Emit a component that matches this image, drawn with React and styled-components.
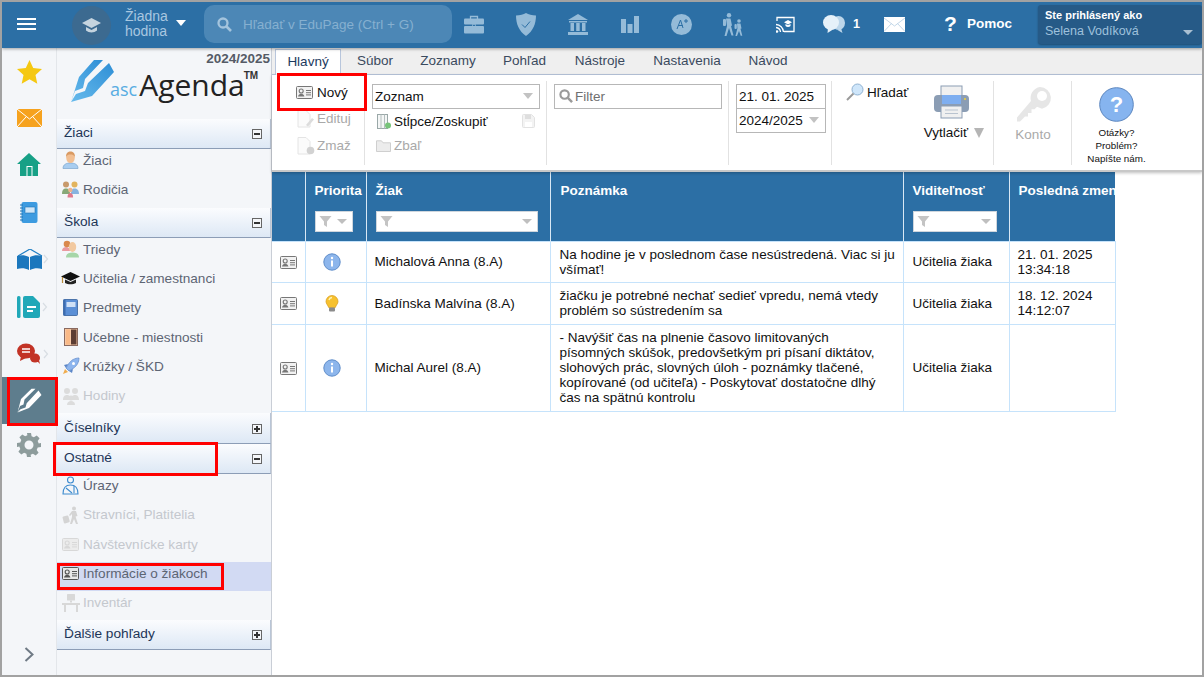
import React from "react";
import styled, { createGlobalStyle } from "styled-components";

const Global = createGlobalStyle`
  html, body { margin: 0; padding: 0; background: #fff; }
  * { box-sizing: border-box; }
  body { font-family: "Liberation Sans", Arial, sans-serif; font-size: 13.6px; }
`;

const Frame = styled.div`
  position: relative; width: 1204px; height: 677px; overflow: hidden;
  border: 2px solid #a2a2a2; background: #fff;
  display: flex; flex-direction: column;
`;
const TopBar = styled.header`
  height: 46px; flex: none; background: #2c6fa5; display: flex; align-items: center;
  position: relative; z-index: 2; box-shadow: 0 1px 3px rgba(0,0,0,.35); padding-left: 15px;
`;
const Burger = styled.div`
  width: 19px; height: 12px; margin-top: -2px; flex: none;
  border-top: 2px solid #fff; border-bottom: 2px solid #fff; position: relative;
  &::after { content: ""; position: absolute; left: 0; right: 0; top: 3px; height: 2px; background: #fff; }
`;
const LessonDisc = styled.div`
  width: 39px; height: 39px; border-radius: 50%; background: #3c6a90; margin-left: 36px; flex: none;
  display: flex; align-items: center; justify-content: center;
`;
const LessonText = styled.div`
  width: 50px; margin-left: 14px; color: #a9c7e0; font-size: 14px; line-height: 15px; margin-top: -2px; flex: none;
`;
const Caret = styled.span`
  flex: none; width: 0; height: 0; border-left: 5.5px solid transparent; border-right: 5.5px solid transparent;
  border-top: ${p => p.$h || 5}px solid ${p => p.$c || "#fff"}; margin-left: ${p => p.$ml || 0}px; margin-top: ${p => p.$mt || 0}px;
`;
const Search = styled.div`
  width: 248px; height: 38px; border-radius: 10px; background: #4c87b6; margin-left: 18px; flex: none;
  display: flex; align-items: center; padding-left: 13px; gap: 11px; color: #86b0d0; font-size: 13.5px; margin-top: -2px;
`;
const TopIcon = styled.div`
  flex: none; width: ${p => p.$w}px; margin-left: ${p => p.$ml}px; display: flex; justify-content: center; align-items: center; margin-top: -2px;
`;
const CountBadge = styled.span`
  color: #fff; font-weight: 700; font-size: 12.5px; margin-left: 8px; margin-top: -2px; flex: none; width: 10px;
`;
const HelpMark = styled.span`
  color: #fff; font-weight: 700; font-size: 21px; margin-left: 39px; width: 14px; margin-top: -2px; flex: none;
`;
const HelpLabel = styled.span`
  color: #fff; font-weight: 700; font-size: 13.5px; margin-left: 9px; margin-top: -3px; flex: none; width: 46px;
`;
const UserBox = styled.div`
  width: 164px; height: 39px; margin-left: 25px; background: #265a87; border-radius: 3px; flex: none; margin-top: -2px;
  padding: 3px 7px; position: relative; box-shadow: 0 1px 2px rgba(0,0,0,.3);
`;
const UserLabel = styled.div` color: #fff; font-weight: 700; font-size: 11px; line-height: 15px; `;
const UserRow = styled.div`
  color: #9fc1dc; font-size: 12.5px; line-height: 17px; display: flex; justify-content: space-between; align-items: center; padding-right: 2px;
`;

const Body = styled.div` flex: 1; display: flex; min-height: 0; `;
const Rail = styled.nav`
  width: 55px; flex: none; background: #f4f6f9; display: flex; flex-direction: column; border-right: 1px solid #e3e6ea;
`;
const RailItem = styled.div`
  height: 47px; flex: none; display: flex; align-items: center; justify-content: center; padding-left: ${p => p.$pl || 0}px;
  background: ${p => p.$active ? "#5e7d8d" : "transparent"};
  padding-bottom: ${p => p.$up || 0}px;
`;
const RailSpacer = styled.div` flex: 1; `;
const RailFoot = styled.div` height: 30px; flex: none; display: flex; justify-content: center; padding-top: 2px; `;

const Side = styled.aside`
  width: 215px; flex: none; background: #f4f6f9; border-right: 1px solid #c9ced6; display: flex; flex-direction: column;
`;
const LogoArea = styled.div`
  height: 71px; flex: none; position: relative; padding-left: 14px; display: flex; align-items: flex-start;
`;
const Year = styled.div`
  position: absolute; right: 1px; top: 3px; font-weight: 700; font-size: 13.5px; color: #555b66;
`;
const LogoMark = styled.div` margin-top: 12px; flex: none; `;
const LogoWords = styled.div` display: flex; align-items: baseline; margin-left: -5px; margin-top: 18px; `;
const Asc = styled.span` font-family: "Open Sans", sans-serif; font-size: 18px; line-height: 38px; color: #58ace2; `;
const Agenda = styled.span` font-family: "Open Sans", sans-serif; font-size: 30px; line-height: 38px; color: #222; margin-left: 2px; `;
const Tm = styled.span` font-weight: 700; font-size: 10px; color: #333; margin-left: -1px; transform: translateY(-17px); `;

const SectionHead = styled.div`
  height: ${p => p.$h || 29.5}px; flex: none; margin-top: ${p => p.$mt || 0}px; padding: 0 8px 2px 7px;
  background: linear-gradient(#fbfcfe, #dde8f5); border-bottom: 1px solid #8c9db6; border-right: 1px solid #b9c5d6;
  display: flex; align-items: center; justify-content: space-between; color: #1d3557; font-size: 13.7px;
`;
const Toggle = styled.span`
  width: 10px; height: 10px; border: 1px solid #666; background: #f4f6f9; position: relative; flex: none; margin-top: 3px;
  &::before { content: ""; position: absolute; left: 1px; right: 1px; top: 3px; height: 2px; background: #333; }
  ${p => p.$plus && `&::after { content: ""; position: absolute; top: 1px; bottom: 1px; left: 3px; width: 2px; background: #333; }`}
`;
const Item = styled.div`
  height: 29.3px; flex: none; display: flex; align-items: center; padding: 0 0 6px 4px; gap: 3px;
  font-size: 13.6px; color: ${p => p.$off ? "#c4c8ce" : "#5d6574"};
  background: ${p => p.$selected ? "#d2daf3" : "transparent"};
`;
const ItemIcon = styled.span` width: 19px; height: 18px; flex: none; display: flex; align-items: center; justify-content: center; `;

const Main = styled.main` flex: 1; min-width: 0; display: flex; flex-direction: column; `;
const Tabs = styled.div`
  height: 27px; flex: none; background: #efefef; border-bottom: 1px solid #b8c6dc; display: flex; align-items: flex-end; padding-left: 3px;
`;
const Tab = styled.div`
  height: 26px; font-size: 13.5px; color: ${p => p.$active ? "#1c3a5e" : "#3a4a5e"}; padding: 5px 12px 0;
  width: ${p => p.$w}px; white-space: nowrap; display: flex; justify-content: center;
  ${p => p.$active && `background:#fff; border:1px solid #b8c6dc; border-bottom:0; position:relative; top:1px; padding-top:4px;`}
`;
const Ribbon = styled.div`
  height: 97px; flex: none; display: flex; background: #fff; border-bottom: 2px solid #c8c8c8;
  box-shadow: 0 1px 3px rgba(0,0,0,.25); position: relative; z-index: 1; padding-top: 6px;
`;
const Group = styled.div`
  width: ${p => p.$w}px; flex: none; height: 84px; padding-left: ${p => p.$pl || 0}px;
  border-right: ${p => p.$noline ? "0" : "1px solid #e2e2e2"}; display: flex; flex-direction: column;
`;
const RibbonBtn = styled.div`
  display: flex; align-items: center; height: ${p => p.$h || 26}px; gap: ${p => p.$gap || 3}px; font-size: 13.5px; padding-left: ${p => p.$pl || 0}px;
  color: ${p => p.$off ? "#a9a9a9" : "#111"}; white-space: nowrap;
`;
const SelectBox = styled.div`
  height: 25px; width: ${p => p.$w}px; border: 1px solid #b7b7b7; display: flex; align-items: center; justify-content: space-between;
  padding: 0 6px 1px 2px; font-size: 13.5px; color: #111; margin-top: ${p => p.$mt ?? 3}px; flex: none; background: #fff;
`;
const FilterBox = styled(SelectBox)` justify-content: flex-start; gap: 2px; color: #6f6f6f; padding-left: 4px; `;
const SaveSlot = styled.span` margin-left: auto; margin-right: 11px; display: flex; `;
const BigBtn = styled.div`
  display: flex; flex-direction: column; align-items: center; font-size: ${p => p.$fs || 13.5}px; color: ${p => p.$off ? "#a9a9a9" : "#111"};
  line-height: ${p => p.$lh || 16}px; text-align: center; padding-left: ${p => p.$pl || 0}px;
`;
const PrintColumn = styled.div`
  display: flex; flex-direction: column; align-items: center; width: 62px; margin: -18px 0 0 77px; font-size: 13.5px; color: #111;
`;
const PrintRow = styled.div` display: flex; align-items: center; gap: 6px; margin-top: 6px; `;
const PrinterSlot = styled.div` display: flex; margin-right: 6px; `;
const KeySlot = styled.div` height: 46px; display: flex; align-items: center; margin-left: 1px; `;
const HelpSlot = styled.div` height: 36px; margin: 6px 0 3px; `;

const TableWrap = styled.div` flex: 1; background: #fff; `;
const Grid = styled.table`
  border-collapse: collapse; table-layout: fixed; width: 843px; font-size: 13.5px; color: #111;
`;
const Th = styled.th`
  background: #2c6fa5; color: #fff; font-weight: 700; font-size: 13.5px; text-align: left; vertical-align: top;
  padding: 11px 0 0 ${p => p.$pl ?? 9}px; height: 69px; border-left: 1px solid #d8e8f5; overflow: hidden; white-space: nowrap;
  &:first-child { border-left: 0; }
`;
const HeadFilter = styled.div`
  width: ${p => p.$w}px; height: 21px; background: #fff; border: 1px solid #cfd6dd; margin-top: 13px; display: flex; align-items: center;
  justify-content: space-between; padding: 0 5px 0 3px;
`;
const Td = styled.td`
  border: 1px solid #c6e3fb; padding: 0 ${p => p.$pr ?? 9}px 0 ${p => p.$pl ?? 9}px; height: ${p => p.$h}px; vertical-align: middle; line-height: 15px;
  &:first-child { border-left: 0; }
`;
const IconCell = styled(Td)` text-align: center; padding: 0 ${p => p.$pr || 0}px 0 0; `;
const CellIcon = styled.span` display: inline-flex; vertical-align: middle; `;
const Mark = styled.div`
  position: absolute; left: ${p => p.$l}px; top: ${p => p.$t}px; width: ${p => p.$w}px; height: ${p => p.$h}px;
  border: 3px solid #f00; z-index: 5; pointer-events: none;
`;

/* ---------- drawings ---------- */
const IdCard = ({ c = "#777", bg = "#f2f2f2", w = 17, h = 13 }) => (
  <svg width={w} height={h} viewBox="0 0 17 13">
    <rect x=".5" y=".5" width="16" height="12" rx="1" fill={bg} stroke={c} />
    <circle cx="5.2" cy="5" r="2" fill="none" stroke={c} strokeWidth="1.1" />
    <path d="M2 10.5c.4-2 1.6-2.8 3.2-2.8s2.8.8 3.2 2.8z" fill={c} />
    <path d="M10 4.5h5M10 6.7h5M10 8.9h5" stroke={c} strokeWidth="1" />
  </svg>
);
const Info = () => (
  <svg width="18" height="18" viewBox="0 0 18 18">
    <circle cx="9" cy="9" r="8.2" fill="#8db6ec" stroke="#5f8dc9" />
    <rect x="8" y="7.5" width="2" height="6" fill="#fff" /><circle cx="9" cy="5" r="1.2" fill="#fff" />
  </svg>
);
const Bulb = () => (
  <svg width="14" height="17" viewBox="0 0 14 17">
    <path d="M7 .5a6 6 0 0 0-6 6c0 2.400 2 3.600 2.700 6h6.600c.7-2.400 2.700-3.600 2.700-6a6 6 0 0 0-6-6z" fill="#f7c12f" stroke="#d79a16" strokeWidth=".7" />
    <path d="M4 5a3.500 3.500 0 0 1 3-2.400" stroke="#fff3b8" strokeWidth="1.500" fill="none" />
    <rect x="4" y="12.500" width="6" height="4" rx="1" fill="#8b8b8b" />
  </svg>
);
const Funnel = ({ s = 13 }) => (
  <svg width={s} height={s} viewBox="0 0 13 13"><path d="M.5 1h12L8 6.500V12L5 10V6.500z" fill="#c4c4c4" /></svg>
);
const Person = ({ skin = "#f2bf92", hair = "#d99a62", body = "#a8cdf0" }) => (
  <svg width="17" height="18" viewBox="0 0 17 18">
    <path d="M1 17.500c0-4 3-5.500 7.500-5.500s7.500 1.500 7.500 5.500z" fill={body} stroke="#6f9cc8" strokeWidth=".6" />
    <ellipse cx="8.500" cy="6.500" rx="4.300" ry="5.500" fill={skin} />
    <path d="M4.200 6c-.5-4 2-5.500 4.300-5.500S13.300 2 12.800 6c-1-2-2-2.500-4.300-2.500S5 4 4.200 6z" fill={hair} />
  </svg>
);
const Parents = () => (
  <svg width="19" height="18" viewBox="0 0 19 18">
    <circle cx="5" cy="4.500" r="3" fill="#c89a6c" /><path d="M1 14c0-4 1.500-5.500 4-5.500S9 10 9 14z" fill="#88a878" />
    <circle cx="13.500" cy="4.500" r="3" fill="#e2b45e" /><path d="M10 14c0-4 1-5.500 3.500-5.500S18 10 18 14z" fill="#88b4e0" />
    <circle cx="9.300" cy="10" r="2.200" fill="#eeb48c" /><path d="M6.500 17.500c0-3 1-4.500 2.800-4.500s2.800 1.500 2.800 4.500z" fill="#e07a8c" />
  </svg>
);
const Classes = () => (
  <svg width="19" height="18" viewBox="0 0 19 18">
    <path d="M1 11c0-3 2-4 4-4s4 1 4 4z" fill="#e99aa0" /><circle cx="6" cy="4" r="3.300" fill="#d9894d" />
    <path d="M5 17.500c0-4 3-5 6.500-5s6.500 1 6.500 5z" fill="#a6d6a8" /><ellipse cx="11.500" cy="7" rx="3.700" ry="5" fill="#f2c9a0" />
  </svg>
);
const GradCap = () => (
  <svg width="19" height="15" viewBox="0 0 19 15">
    <path d="M9.500 1 19 5.500 9.500 10 0 5.500z" fill="#111" /><path d="M4 8.500v3.500c3 1.800 8 1.800 11 0V8.500L9.500 11z" fill="#222" />
    <path d="M1.500 6v6" stroke="#b98b3a" strokeWidth="1.200" />
  </svg>
);
const SubjectBook = () => (
  <svg width="15" height="17" viewBox="0 0 15 17">
    <rect x=".5" y=".5" width="14" height="16" rx="1" fill="#5b8fd6" stroke="#35609c" strokeWidth=".8" />
    <rect x="3.500" y="3" width="9" height="5" fill="#cfe0f6" /><rect x=".5" y=".5" width="2" height="16" fill="#3d6cb0" />
  </svg>
);
const Door = () => (
  <svg width="14" height="18" viewBox="0 0 14 18">
    <rect x=".5" y=".5" width="13" height="17" fill="#f6c8a4" stroke="#8a6a60" />
    <rect x="7" y="1.500" width="5.500" height="15" fill="#5c3d33" /><rect x="2" y="1.500" width="4" height="15" fill="#f9b987" />
  </svg>
);
const Rocket = () => (
  <svg width="18" height="18" viewBox="0 0 18 18">
    <path d="M17 1c-4 0-8 2-10.500 6L4 11l3 3 4-2.500C15 9 17 5 17 1z" fill="#8db5ee" stroke="#5b86c8" strokeWidth=".7" />
    <circle cx="11.500" cy="6.500" r="1.500" fill="#fff" /><path d="M3 12l3 3-5 2z" fill="#f0ad4e" />
    <path d="M6 7l-4 1 2 3zM11 12l-1 4-3-2z" fill="#5b86c8" />
  </svg>
);
const Ghosts = () => (
  <svg width="18" height="18" viewBox="0 0 18 18" fill="#dcdcdc">
    <circle cx="5" cy="4" r="3" /><circle cx="13" cy="4" r="3" /><path d="M1 13c0-4 2-5 4-5s4 1 4 5zM9 13c0-4 2-5 4-5s4 1 4 5z" />
    <circle cx="9" cy="11" r="2.500" /><path d="M5 18c0-3 2-4 4-4s4 1 4 4z" />
  </svg>
);
const Injured = () => (
  <svg width="17" height="19" viewBox="0 0 17 19" fill="none" stroke="#3f8ccf" strokeWidth="1.100">
    <circle cx="8.500" cy="4" r="3" /><path d="M1 18c0-6 3-9 7.500-9s7.500 3 7.500 9z" /><path d="M4 12l6 5M12 10v7" />
  </svg>
);
const Walker = () => (
  <svg width="18" height="18" viewBox="0 0 18 18" fill="#d4d4d4">
    <circle cx="12" cy="2.500" r="2" /><path d="M10 5h4l1.500 5-2 .5L13 8l1 4 2 6h-2l-2-5-2 5H8l2-7V8l-2 2-1-1z" />
    <rect x="1" y="10" width="6" height="7" rx="1" transform="rotate(-15 4 13)" />
  </svg>
);
const Desk = () => (
  <svg width="18" height="18" viewBox="0 0 18 18" fill="#d8d8d8">
    <rect x="5" y="0" width="8" height="6.500" rx=".5" /><rect x="8" y="6.500" width="2" height="2" /><rect x="0" y="9" width="18" height="2" />
    <rect x="2" y="11" width="2" height="7" /><rect x="14" y="11" width="2" height="7" />
  </svg>
);
const Star = () => (
  <svg width="25" height="24" viewBox="0 0 25 24"><path d="M12.500 0l3.700 8 8.800 1-6.500 6 1.800 8.700-7.800-4.400-7.800 4.400L6.500 15 0 9l8.800-1z" fill="#f5c812" /></svg>
);
const MailIcon = () => (
  <svg width="25" height="18" viewBox="0 0 25 18">
    <rect width="25" height="18" fill="#f6a21e" /><path d="M0 0l12.500 10L25 0M0 18l9-10M25 18l-9-10" stroke="#fff" strokeWidth="1" fill="none" />
  </svg>
);
const Home = () => (
  <svg width="24" height="23" viewBox="0 0 24 23">
    <path d="M12 0 24 11h-3v12H3V11H0z" fill="#17a086" /><rect x="9.500" y="13" width="6" height="10" fill="#fff" /><rect x="10.500" y="14" width="4" height="9" fill="#17a086" />
  </svg>
);
const Notebook = () => (
  <svg width="18" height="21" viewBox="0 0 18 21">
    <rect x="1.500" width="16" height="21" rx="2" fill="#3d9be0" /><rect x="5" y="5" width="10" height="6" rx=".5" fill="#cfe6f8" stroke="#1f73b3" strokeWidth=".6" />
    <path d="M0 3h3M0 6h3M0 9h3M0 12h3M0 15h3M0 18h3" stroke="#1f73b3" />
  </svg>
);
const OpenBook = () => (
  <svg width="32" height="22" viewBox="0 0 32 22">
    <path d="M1 7 13 0l12 7" fill="none" stroke="#1f7ec4" strokeWidth="1.200" />
    <path d="M0 7c4-1 8-1 12 1v13C8 19 4 19 0 20zM25 7c-4-1-8-1-12 1v13c4-2 8-2 12-1z" fill="#1b77bd" />
    <path d="M27 6l3.500 4L27 14" fill="none" stroke="#d8dde3" strokeWidth="1.200" />
  </svg>
);
const DocIcon = () => (
  <svg width="32" height="22" viewBox="0 0 32 22">
    <rect width="3.500" height="22" rx="1.500" fill="#20a8b8" />
    <path d="M6 2a2 2 0 0 1 2-2h8l7 7v13a2 2 0 0 1-2 2H8a2 2 0 0 1-2-2z" fill="#20a8b8" />
    <path d="M10 11h9M10 15h6" stroke="#fff" strokeWidth="1.800" />
    <path d="M26 7l3.500 4L26 15" fill="none" stroke="#d8dde3" strokeWidth="1.200" />
  </svg>
);
const ChatRed = () => (
  <svg width="32" height="22" viewBox="0 0 32 22">
    <ellipse cx="9" cy="8" rx="9" ry="7.500" fill="#c23326" /><path d="M4 13l-1 5 6-3z" fill="#c23326" />
    <path d="M5 6h8M5 9h8" stroke="#fff" strokeWidth="1.300" />
    <ellipse cx="18" cy="15" rx="5" ry="4.500" fill="#c23326" /><path d="M20 18l3 3-1-4z" fill="#c23326" />
    <path d="M27 7l3.500 4L27 15" fill="none" stroke="#d8dde3" strokeWidth="1.200" />
  </svg>
);
const PENCIL_A = "M0 42 8 17 23 0h9L14 19l-2 9-8 3z";
const PENCIL_B = "M38 3l5 9-22 24L0 42l5-8 9-3 3-8z";
const PencilWhite = () => (
  <svg width="25" height="25" viewBox="0 0 25 25" fill="#fff">
    <path d="M.5 24.500 4 11 14.500.8h4L7.500 11.500l-1 5-3.500 1.500z" />
    <path d="M21.500 2.500 24.500 7 12 20 .5 24.500l3-3.200 5-1.800 1.200-4.200z" />
  </svg>
);
const Gear = () => (
  <svg width="24" height="24" viewBox="0 0 24 24">
    <path fill="#8d9c9c" fillRule="evenodd" d="M10 0h4l.6 3.300 2.300 1 2.800-1.900 2.900 2.900-1.900 2.800 1 2.300L24 10.000v4l-3.300.6-1 2.300 1.900 2.800-2.900 2.900-2.800-1.900-2.300 1L14 24h-4l-.6-3.300-2.300-1-2.800 1.900-2.900-2.900 1.900-2.800-1-2.300L0 14v-4l3.300-.6 1-2.300L2.400 4.300l2.900-2.900 2.800 1.900 2.300-1zM12 7.500a4.500 4.500 0 1 0 0 9 4.500 4.500 0 0 0 0-9z" />
  </svg>
);
const Chevron = () => (
  <svg width="10" height="15" viewBox="0 0 10 15"><path d="M1.500 1 8.500 7.500 1.500 14" fill="none" stroke="#6f7a85" strokeWidth="2" /></svg>
);
const Cap = () => (
  <svg width="19" height="17" viewBox="0 0 19 17">
    <path d="M9.500 1 19 6l-9.500 5L0 6z" fill="#c5d4df" /><path d="M4 10v3.500c3 2.500 8 2.500 11 0V10l-5.500 3z" fill="#c5d4df" />
  </svg>
);
const SearchGlyph = ({ c = "#a4c4dd", s = 15 }) => (
  <svg width={s} height={s} viewBox="0 0 15 15"><circle cx="6" cy="6" r="4.500" fill="none" stroke={c} strokeWidth="2.300" /><path d="M9.500 9.500 14 14" stroke={c} strokeWidth="2.600" /></svg>
);
const C = "#95bbd8";
const Briefcase = () => (
  <svg width="20" height="19" viewBox="0 0 20 19">
    <path d="M6.500 4V1.500h7V4" fill="none" stroke={C} strokeWidth="1.300" /><rect y="3.500" width="20" height="6" rx="1" fill={C} /><rect y="11" width="20" height="7.500" rx="1" fill={C} />
    <circle cx="10" cy="10.300" r="1.500" fill="none" stroke={C} />
  </svg>
);
const Shield = () => (
  <svg width="20" height="23" viewBox="0 0 20 23">
    <path d="M10 0c2.500 1.500 6 2.500 10 2.500C20 11 17 18 10 23 3 18 0 11 0 2.500 4 2.500 7.500 1.500 10 0z" fill={C} />
    <path d="M6 11.500l3 3 5-6" fill="none" stroke="#2c6fa5" strokeWidth="1" />
  </svg>
);
const Bank = () => (
  <svg width="20" height="21" viewBox="0 0 20 21" fill={C}>
    <path d="M10 0 20 6H0z" /><rect x="1" y="7" width="18" height="1.500" /><rect x="2.500" y="9" width="3.500" height="8" /><rect x="8.200" y="9" width="3.500" height="8" /><rect x="14" y="9" width="3.500" height="8" /><rect y="18" width="20" height="3" />
  </svg>
);
const Bars = () => (
  <svg width="18" height="17" viewBox="0 0 18 17" fill={C}><rect y="3" width="5" height="14" /><rect x="6.500" y="8" width="5" height="9" /><rect x="13" width="5" height="17" /></svg>
);
const Grade = () => (
  <svg width="21" height="21" viewBox="0 0 21 21">
    <circle cx="10.500" cy="10.500" r="10.500" fill={C} />
    <path d="M6 15 9.500 6l2.500 8M7.500 11.500h4.200M13 7h4M15 5v4" stroke="#2c6fa5" strokeWidth="1" fill="none" />
  </svg>
);
const Walkers = () => (
  <svg width="22" height="23" viewBox="0 0 22 23" fill={C}>
    <circle cx="7" cy="2.300" r="2.200" /><path d="M4 5.500h4.500l1.500 7-1 .5 2.500 9.500h-2L7 15l-2.500 8h-2L5 13z" /><rect x="1" y="6" width="3" height="7" rx="1" />
    <circle cx="17" cy="8" r="1.800" /><path d="M15 10.500h3.500l1 5-1 .3 1.800 7h-1.600L17 18l-2 5h-1.600l2-7.500z" /><rect x="12.500" y="11" width="2.300" height="5" rx="1" />
  </svg>
);
const Cast = () => (
  <svg width="19" height="17" viewBox="0 0 19 17">
    <path d="M1 5V1.500h17v14H8" fill="none" stroke="#fff" strokeWidth="1.300" />
    <path d="M0 8.500a8 8 0 0 1 7.500 7.500M0 11.500a5 5 0 0 1 4.500 4.500" fill="none" stroke="#fff" strokeWidth="1.300" /><circle cx="1" cy="15.500" r="1.300" fill="#fff" />
    <path d="M12 4l4 2.200-4 2.200-4-2.200zM9.500 8v2c1.500 1.200 3.500 1.200 5 0V8l-2.500 1.300z" fill="#fff" />
  </svg>
);
const Bubbles = () => (
  <svg width="22" height="19" viewBox="0 0 22 19">
    <ellipse cx="15.500" cy="8" rx="6.500" ry="7" fill="#bcd6ea" /><path d="M18 13l1.500 5-5-3z" fill="#bcd6ea" />
    <ellipse cx="8" cy="7.500" rx="8" ry="7.500" fill="#e6f1f9" /><path d="M5 13l-.5 5 5.500-3.500z" fill="#e6f1f9" />
  </svg>
);
const Envelope = () => (
  <svg width="21" height="15" viewBox="0 0 21 15"><rect width="21" height="15" fill="#fff" /><path d="M0 1l10.500 8L21 1M0 14.500l7.500-8M21 14.500l-7.500-8" stroke="#b4cde2" strokeWidth=".8" fill="none" /></svg>
);
const LogoPencil = () => (
  <svg width="44" height="42" viewBox="0 0 44 42">
    <defs><linearGradient id="lp" x1="0" y1="1" x2="1" y2="0"><stop offset="0" stopColor="#66baec" /><stop offset="1" stopColor="#2f8fd6" /></linearGradient></defs>
    <path d={PENCIL_A} fill="url(#lp)" /><path d={PENCIL_B} fill="url(#lp)" />
  </svg>
);
const FileOff = ({ badge }) => (
  <svg width="18" height="18" viewBox="0 0 18 18">
    <path d="M1 .5h8l4 4V17H1z" fill="#fbfbfb" stroke="#e4e4e4" />
    {badge === "pen" ? <path d="M9 15l6-7 2 1.500-6 7z" fill="#dcdcdc" /> : <circle cx="13.500" cy="13.500" r="3.800" fill="#d2d2d2" />}
  </svg>
);
const Columns = () => (
  <svg width="15" height="15" viewBox="0 0 15 15">
    <rect x=".5" y=".5" width="10" height="14" fill="#f4f6f6" stroke="#9aa8a8" /><path d="M4 .5v14M7.500 .5v14" stroke="#b4bebe" />
    <circle cx="11" cy="11.500" r="3" fill="#77c47a" />
  </svg>
);
const Folder = () => (
  <svg width="15" height="12" viewBox="0 0 15 12"><path d="M.5 11.500V.8h5l1.500 2h7.500v8.700z" fill="#ececec" stroke="#cfcfcf" /></svg>
);
const Floppy = () => (
  <svg width="13" height="14" viewBox="0 0 13 14"><path d="M.5 1.500a1 1 0 0 1 1-1h8l3 3v9a1 1 0 0 1-1 1h-10a1 1 0 0 1-1-1z" fill="#f3f3f3" stroke="#e2e2e2" /><rect x="3" y="1" width="6" height="4" fill="#dedede" /><rect x="3" y="8" width="7" height="5" fill="#fff" /></svg>
);
const Lens = () => (
  <svg width="18" height="18" viewBox="0 0 18 18"><circle cx="11.500" cy="6.500" r="5.500" fill="#cfe6fa" stroke="#8fb2d2" /><path d="M7.500 10.500 1 17" stroke="#9a9a9a" strokeWidth="2" /></svg>
);
const Printer = () => (
  <svg width="35" height="34" viewBox="0 0 35 34">
    <rect x="7" y="1" width="21" height="10" fill="#f0f0f0" stroke="#8b9db4" />
    <rect y="10" width="35" height="17" rx="4" fill="#8b9db4" />
    <rect x="8" y="10" width="19" height="9" fill="#7eaef0" />
    <circle cx="31" cy="14" r="1" fill="#f2d33a" />
    <rect x="7" y="21" width="21" height="12" fill="#f0f0f0" stroke="#8b9db4" />
    <path d="M11 25h13M11 28.500h13" stroke="#b9c3cf" />
  </svg>
);
const Key = () => (
  <svg width="36" height="36" viewBox="0 0 36 36">
    <path d="M24 1a11 11 0 0 1 2 21.800l-5-2-2.500 2.500h-3V27h-3.500v3.500H9L4 35.500H1v-4L15 15a11 11 0 0 1 9-14z" fill="#e6e6e6" />
    <circle cx="26" cy="10" r="5" fill="#fff" />
  </svg>
);
const HelpCircle = () => (
  <svg width="35" height="35" viewBox="0 0 35 35">
    <circle cx="17.500" cy="17.500" r="16.800" fill="#86b4ef" stroke="#5d87bf" />
    <text x="17.500" y="25" textAnchor="middle" fontFamily="Liberation Sans" fontWeight="700" fontSize="22" fill="#fff">?</text>
  </svg>
);

const rows = [
  { icon: <Info />, h: 41, name: "Michalová Anna (8.A)", note: "Na hodine je v poslednom čase nesústredená. Viac si ju všímať!", date: ["21. 01. 2025", "13:34:18"] },
  { icon: <Bulb />, h: 42, name: "Badínska Malvína (8.A)", note: "žiačku je potrebné nechať sedieť vpredu, nemá vtedy problém so sústredením sa", date: ["18. 12. 2024", "14:12:07"] },
  { icon: <Info />, h: 87, name: "Michal Aurel (8.A)", note: "- Navýšiť čas na plnenie časovo limitovaných písomných skúšok, predovšetkým pri písaní diktátov, slohových prác, slovných úloh - poznámky tlačené, kopírované (od učiteľa) - Poskytovať dostatočne dlhý čas na spätnú kontrolu", date: [] },
];

export default function App() {
  return (
    <Frame>
      <Global />
      <TopBar>
        <Burger />
        <LessonDisc><Cap /></LessonDisc>
        <LessonText>Žiadna hodina</LessonText>
        <Caret $ml={1} $h={6} $mt={-4} />
        <Search><SearchGlyph /> Hľadať v EduPage (Ctrl + G)</Search>
        <TopIcon $w={20} $ml={12}><Briefcase /></TopIcon>
        <TopIcon $w={20} $ml={32}><Shield /></TopIcon>
        <TopIcon $w={20} $ml={32}><Bank /></TopIcon>
        <TopIcon $w={18} $ml={33}><Bars /></TopIcon>
        <TopIcon $w={21} $ml={32}><Grade /></TopIcon>
        <TopIcon $w={22} $ml={30}><Walkers /></TopIcon>
        <TopIcon $w={19} $ml={32}><Cast /></TopIcon>
        <TopIcon $w={22} $ml={28}><Bubbles /></TopIcon>
        <CountBadge>1</CountBadge>
        <TopIcon $w={21} $ml={21}><Envelope /></TopIcon>
        <HelpMark>?</HelpMark>
        <HelpLabel>Pomoc</HelpLabel>
        <UserBox>
          <UserLabel>Ste prihlásený ako</UserLabel>
          <UserRow>Selena Vodíková <Caret $c="#a9bfd2" $h={5} $mt={3} /></UserRow>
        </UserBox>
      </TopBar>
      <Body>
        <Rail>
          <RailItem><Star /></RailItem>
          <RailItem $up={2}><MailIcon /></RailItem>
          <RailItem $up={2}><Home /></RailItem>
          <RailItem><Notebook /></RailItem>
          <RailItem $pl={7}><OpenBook /></RailItem>
          <RailItem $pl={7}><DocIcon /></RailItem>
          <RailItem $pl={7}><ChatRed /></RailItem>
          <RailItem $active><PencilWhite /></RailItem>
          <RailItem $up={5}><Gear /></RailItem>
          <RailSpacer />
          <RailFoot><Chevron /></RailFoot>
        </Rail>
        <Side>
          <LogoArea>
            <Year>2024/2025</Year>
            <LogoMark><LogoPencil /></LogoMark>
            <LogoWords><Asc>asc</Asc><Agenda>Agenda</Agenda><Tm>TM</Tm></LogoWords>
          </LogoArea>
          <SectionHead>Žiaci <Toggle /></SectionHead>
          <Item><ItemIcon><Person /></ItemIcon>Žiaci</Item>
          <Item><ItemIcon><Parents /></ItemIcon>Rodičia</Item>
          <SectionHead $mt={1}>Škola <Toggle /></SectionHead>
          <Item><ItemIcon><Classes /></ItemIcon>Triedy</Item>
          <Item><ItemIcon><GradCap /></ItemIcon>Učitelia / zamestnanci</Item>
          <Item><ItemIcon><SubjectBook /></ItemIcon>Predmety</Item>
          <Item><ItemIcon><Door /></ItemIcon>Učebne - miestnosti</Item>
          <Item><ItemIcon><Rocket /></ItemIcon>Krúžky / ŠKD</Item>
          <Item $off><ItemIcon><Ghosts /></ItemIcon>Hodiny</Item>
          <SectionHead $h={30.5}>Číselníky <Toggle $plus /></SectionHead>
          <SectionHead $h={30}>Ostatné <Toggle /></SectionHead>
          <Item><ItemIcon><Injured /></ItemIcon>Úrazy</Item>
          <Item $off><ItemIcon><Walker /></ItemIcon>Stravníci, Platitelia</Item>
          <Item $off><ItemIcon><IdCard c="#d8d8d8" bg="#ececec" /></ItemIcon>Návštevnícke karty</Item>
          <Item $selected><ItemIcon><IdCard c="#555" bg="#e8e8e8" /></ItemIcon>Informácie o žiakoch</Item>
          <Item $off><ItemIcon><Desk /></ItemIcon>Inventár</Item>
          <SectionHead $h={30}>Ďalšie pohľady <Toggle $plus /></SectionHead>
        </Side>
        <Main>
          <Tabs>
            <Tab $active $w={66}>Hlavný</Tab>
            <Tab $w={68}>Súbor</Tab>
            <Tab $w={78}>Zoznamy</Tab>
            <Tab $w={75}>Pohľad</Tab>
            <Tab $w={76}>Nástroje</Tab>
            <Tab $w={98}>Nastavenia</Tab>
            <Tab $w={64}>Návod</Tab>
          </Tabs>
          <Ribbon>
            <Group $w={93} $pl={4}>
              <RibbonBtn $pl={20} $gap={4} $h={23}><IdCard /> Nový</RibbonBtn>
              <RibbonBtn $off $pl={21} $gap={2} $h={29}><FileOff badge="pen" /> Edituj</RibbonBtn>
              <RibbonBtn $off $pl={21} $gap={2} $h={25}><FileOff /> Zmaž</RibbonBtn>
            </Group>
            <Group $w={182} $pl={7}>
              <SelectBox $w={168}>Zoznam <Caret $c="#c2c2c2" $h={6} /></SelectBox>
              <RibbonBtn $pl={5} $gap={2} $h={24}><Columns /> Stĺpce/Zoskupiť <SaveSlot><Floppy /></SaveSlot></RibbonBtn>
              <RibbonBtn $off $pl={4} $gap={3} $h={25}><Folder /> Zbaľ</RibbonBtn>
            </Group>
            <Group $w={182} $pl={7}>
              <FilterBox $w={168}><SearchGlyph c="#9a9a9a" s={14} /> Filter</FilterBox>
            </Group>
            <Group $w={103} $pl={7}>
              <SelectBox $w={90}>21. 01. 2025</SelectBox>
              <SelectBox $w={90} $mt={-1}>2024/2025 <Caret $c="#c2c2c2" $h={6} /></SelectBox>
            </Group>
            <Group $w={162} $pl={14}>
              <RibbonBtn $h={22} $gap={3}><Lens /> Hľadať</RibbonBtn>
              <PrintColumn>
                <PrinterSlot><Printer /></PrinterSlot>
                <PrintRow>Vytlačiť <Caret $c="#b5b5b5" $h={10} /></PrintRow>
              </PrintColumn>
            </Group>
            <Group $w={78}>
              <BigBtn $off $pl={1}><KeySlot><Key /></KeySlot>Konto</BigBtn>
            </Group>
            <Group $w={87} $noline>
              <BigBtn $fs={9.8} $lh={13} $pl={2}><HelpSlot><HelpCircle /></HelpSlot>Otázky?<br />Problém?<br />Napíšte nám.</BigBtn>
            </Group>
          </Ribbon>
          <TableWrap>
            <Grid>
              <colgroup>
                <col style={{ width: 33 }} /><col style={{ width: 61 }} /><col style={{ width: 184 }} /><col style={{ width: 353 }} /><col style={{ width: 106 }} /><col style={{ width: 106 }} />
              </colgroup>
              <thead>
                <tr>
                  <Th />
                  <Th>Priorita<HeadFilter $w={38}><Funnel /><Caret $c="#bfbfbf" $h={5} /></HeadFilter></Th>
                  <Th>Žiak<HeadFilter $w={162}><Funnel /><Caret $c="#bfbfbf" $h={5} /></HeadFilter></Th>
                  <Th $pl={10}>Poznámka</Th>
                  <Th>Viditeľnosť<HeadFilter $w={84}><Funnel /><Caret $c="#bfbfbf" $h={5} /></HeadFilter></Th>
                  <Th>Posledná zmena</Th>
                </tr>
              </thead>
              <tbody>
                {rows.map(r => (
                  <tr key={r.name}>
                    <IconCell $h={r.h}><CellIcon><IdCard /></CellIcon></IconCell>
                    <IconCell $pr={7}><CellIcon>{r.icon}</CellIcon></IconCell>
                    <Td $pl={8}>{r.name}</Td>
                    <Td $pr={7}>{r.note}</Td>
                    <Td>{"Učitelia žiaka"}</Td>
                    <Td $pl={8}>{r.date.map(d => <div key={d}>{d}</div>)}</Td>
                  </tr>
                ))}
              </tbody>
            </Grid>
          </TableWrap>
        </Main>
      </Body>
      <Mark $l={275} $t={71} $w={90} $h={38} />
      <Mark $l={5} $t={375} $w={51} $h={49} />
      <Mark $l={51} $t={440} $w={165} $h={34} />
      <Mark $l={55} $t={561} $w={167} $h={27} />
    </Frame>
  );
}
